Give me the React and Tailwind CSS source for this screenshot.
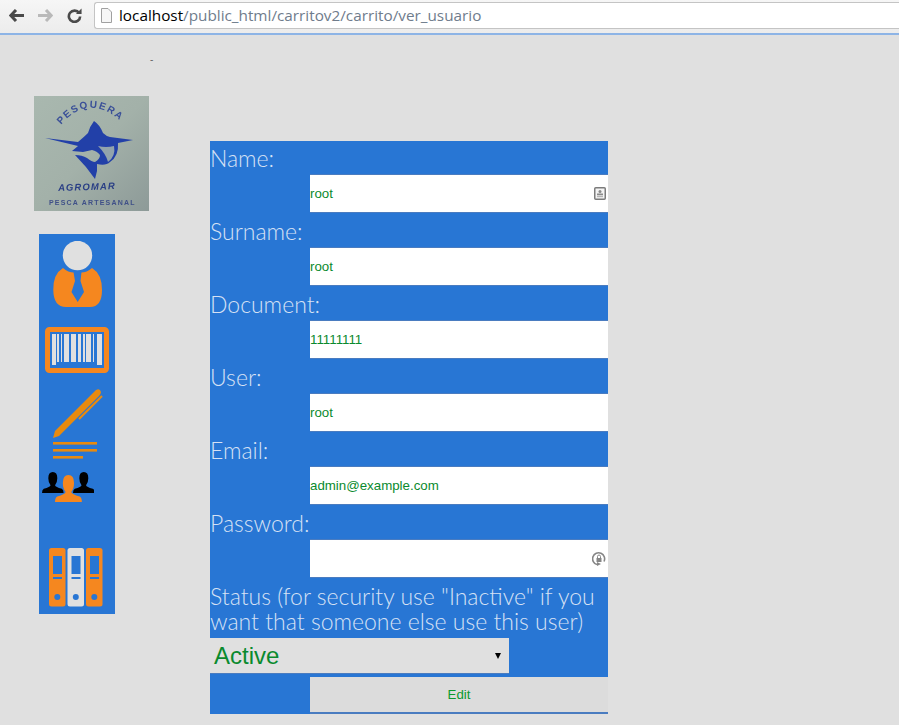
import React from 'react'

const labelClass = 'block pt-[1px] text-[23px] leading-[32px] font-light text-[#d6e1f4]'
const inputClass =
  "w-[298px] h-[39px] ml-[100px] bg-white border-y border-[#4a7cc0] flex items-center justify-between pr-[2px] font-['Liberation_Sans',sans-serif] text-[13.3px] text-[#0a8a2e]"

function NavIcons() {
  return (
    <div className="flex items-center w-[94px] pl-[9px] gap-[14px]">
      <svg width="15" height="13" viewBox="0 0 15 13">
        <path d="M7 1 L1.8 6.5 L7 12 M2 6.5 H15" fill="none" stroke="#4a4a4a" strokeWidth="3" />
      </svg>
      <svg width="15" height="13" viewBox="0 0 15 13">
        <path d="M8 1 L13.2 6.5 L8 12 M13 6.5 H0" fill="none" stroke="#b9b9b9" strokeWidth="3" />
      </svg>
      <svg width="15" height="15" viewBox="0 0 16 16">
        <path d="M13 5.5 A6 6 0 1 0 14 9" fill="none" stroke="#4a4a4a" strokeWidth="2.8" />
        <path d="M9.5 6.5 H15.5 V0.5 Z" fill="#4a4a4a" />
      </svg>
    </div>
  )
}

function Logo() {
  return (
    <svg width="115" height="115" viewBox="0 0 115 115" className="block">
      <defs>
        <linearGradient id="logoBg" x1="0" y1="0" x2="1" y2="1">
          <stop offset="0" stopColor="#a9b8af" />
          <stop offset="0.5" stopColor="#a3b1a9" />
          <stop offset="1" stopColor="#8d9a98" />
        </linearGradient>
        <path id="logoArc" d="M27 29 Q56 -6 92 30" fill="none" />
        <filter id="soft">
          <feGaussianBlur stdDeviation="0.45" />
        </filter>
      </defs>
      <rect width="115" height="115" fill="url(#logoBg)" />
      <g filter="url(#soft)">
        <text fontSize="10" fontWeight="700" fill="#3a5098" fontFamily="Liberation Sans, sans-serif" letterSpacing="1.6">
          <textPath href="#logoArc">PESQUERA</textPath>
        </text>
        <path
          d="M11 42 L44 46 Q50 41 54 37 Q56 30 60 25 Q66 29 69 37 Q72 40 76 41 L99 44 L84 47 Q85 60 76 66 Q72 70 63 68 L63 75 L61 83 Q52 70 41 59 Q48 59 53 62 Q58 66 61 66 Q66 63 66 59 Q63 55 58 54 L49 56 L38 55 L44 50 Z"
          fill="#2440a8"
        />
        <path d="M64 50 Q72 52 80 50 Q82 60 74 66 Q72 58 64 50 Z" fill="#92a3ac" />
        <text x="24" y="94" fontSize="9.5" fontWeight="700" fontStyle="italic" fill="#2a3f85" fontFamily="Liberation Sans, sans-serif" letterSpacing="1.1" transform="rotate(-2 56 90)">
          AGROMAR
        </text>
        <text x="15" y="109" fontSize="7" fontWeight="700" fill="#3f5088" fontFamily="Liberation Sans, sans-serif" letterSpacing="1.2">
          PESCA ARTESANAL
        </text>
      </g>
    </svg>
  )
}

function UserIcon() {
  return (
    <svg width="54" height="68" viewBox="0 0 54 68" className="block">
      <circle cx="26.5" cy="14.5" r="14.7" fill="#e0e0e0" />
      <path d="M12 27 Q2 33 2.3 49 Q2.5 66 15 66 H39 Q51 66 51 49 Q51 33 41 27 Q34 33 26.5 31 Q19 33 12 27 Z" fill="#f5871f" />
      <path d="M22.5 31 H30.5 L29.5 40 L33 51 L26.7 61 L20.5 51 L24 40 Z" fill="#2876d4" />
    </svg>
  )
}

function BarcodeIcon() {
  const bars = [[2, 4], [7, 2], [11, 1], [14, 5], [21, 5], [28, 3], [33, 2], [36, 5], [43, 1], [47, 5]]
  return (
    <svg width="64" height="46" viewBox="0 0 64 46" className="block">
      <rect x="2.5" y="2.5" width="59" height="41" rx="2" fill="none" stroke="#f5871f" strokeWidth="5" />
      <g fill="#e0e0e0">
        {bars.map(([x, w]) => (
          <rect key={x} x={x + 5} y="7" width={w} height={x === 2 || x === 47 ? 31 : 28} />
        ))}
      </g>
    </svg>
  )
}

function PenIcon() {
  return (
    <svg width="52" height="72" viewBox="0 0 52 72" className="block">
      <path d="M3 42 L44 1 Q48 -1 49 3 Q49 5 47 7 L7 47 L1 49 Z" fill="#e88a0e" />
      <path d="M27 30 L50 7" stroke="#e88a0e" strokeWidth="2.2" fill="none" />
      <rect x="1" y="53" width="44" height="2.6" fill="#e88a0e" />
      <rect x="1" y="60" width="44" height="2.6" fill="#e88a0e" />
      <rect x="1" y="67" width="30" height="2.6" fill="#e88a0e" />
    </svg>
  )
}

function PeopleIcon() {
  const person = 'M12 0 Q17 0 17 7 Q17 12 14.5 15 Q15 17 22 19 Q24 20 24 24 H0 Q0 20 2 19 Q9 17 9.5 15 Q7 12 7 7 Q7 0 12 0 Z'
  return (
    <svg width="52" height="32" viewBox="0 0 52 32" className="block">
      <path d={person} fill="#000" transform="translate(0 0) scale(0.9 0.875)" />
      <path d={person} fill="#000" transform="translate(31 0) scale(0.9 0.875)" />
      <path d={person} fill="#f5871f" transform="translate(13 3) scale(1.12 1.125)" />
    </svg>
  )
}

function Binder({ color }) {
  return (
    <g>
      <rect width="16.5" height="58.5" rx="2.5" fill={color} />
      <rect x="4" y="8" width="9" height="18" fill="#2876d4" />
      <rect x="4" y="29" width="9" height="2" fill="#2876d4" />
      <circle cx="8.3" cy="49" r="3" fill="#2876d4" />
    </g>
  )
}

function BindersIcon() {
  return (
    <svg width="54" height="59" viewBox="0 0 54 59" className="block">
      <Binder color="#f5871f" />
      <g transform="translate(18.5 0)">
        <Binder color="#e0e0e0" />
      </g>
      <g transform="translate(37 0)">
        <Binder color="#f5871f" />
      </g>
    </svg>
  )
}

function Field({ label, value, icon }) {
  return (
    <div>
      <label className={labelClass}>{label}</label>
      <div className={inputClass}>
        <span>{value}</span>
        {icon}
      </div>
      <div className="h-[1px]" />
    </div>
  )
}

const contactIcon = (
  <svg width="12" height="13" viewBox="0 0 12 13">
    <rect x="0.75" y="0.75" width="10.5" height="11.5" rx="1" fill="#f4f4f4" stroke="#7c7c7c" strokeWidth="1.5" />
    <circle cx="6" cy="4.6" r="1.5" fill="#8a8a8a" />
    <rect x="3" y="6.5" width="6" height="1.8" fill="#8a8a8a" />
    <rect x="3" y="9" width="6" height="1.2" fill="#b5b5b5" />
  </svg>
)

const lockIcon = (
  <svg width="14" height="14" viewBox="0 0 14 14">
    <path d="M12 9.5 A6 6 0 1 0 5 12.6" fill="none" stroke="#868686" strokeWidth="1.6" />
    <path d="M5 10 V14 L9 12 Z" fill="#868686" />
    <rect x="4.5" y="6" width="5" height="4" fill="#868686" />
    <path d="M5.5 6 V4.5 A1.5 1.5 0 0 1 8.5 4.5 V6" fill="none" stroke="#868686" />
  </svg>
)

export default function App() {
  return (
    <div className="min-h-[725px] bg-[#e0e0e0] font-['Liberation_Sans',sans-serif]">
      <div className="h-[35px] bg-gradient-to-b from-[#f6f6f6] to-[#ececec] border-b-2 border-[#8db4e6] flex items-start pt-[2px]">
        <div className="h-[27px] flex items-center">
          <NavIcons />
        </div>
        <div className="flex-1 h-[27px] bg-white border border-[#c4c4c4] border-r-0 rounded-l-[3px] flex items-center pl-[6px] gap-[7px]">
          <svg width="11" height="15" viewBox="0 0 11 15">
            <path d="M0.5 0.5 H7 L10.5 4 V14.5 H0.5 Z" fill="#f6f6f6" stroke="#a0a0a0" />
          </svg>
          <span className="text-[15.3px] leading-[20px] -mt-[2px] font-['Open_Sans',sans-serif] text-[#6f7c8c]">
            <span className="text-black">localhost</span>/public_html/carritov2/carrito/ver_usuario
          </span>
        </div>
      </div>

      <div className="flex items-start">
        <div className="w-[210px] shrink-0">
          <div className="h-[61px] relative">
            <span className="absolute left-[150px] top-[19px] text-[10px] leading-[12px] text-[#666]">-</span>
          </div>
          <div className="ml-[34px] w-[115px]">
            <Logo />
          </div>
          <div className="ml-[39px] mt-[23px] w-[76px] h-[380px] bg-[#2876d4] flex flex-col items-center">
            <div className="mt-[7px] ml-[2px]">
              <UserIcon />
            </div>
            <div className="mt-[18px]">
              <BarcodeIcon />
            </div>
            <div className="mt-[16px] ml-[2px]">
              <PenIcon />
            </div>
            <div className="mt-[11px] -ml-[19px]">
              <PeopleIcon />
            </div>
            <div className="mt-[44px] -ml-[2px]">
              <BindersIcon />
            </div>
          </div>
        </div>

        <div className="mt-[106px] w-[398px] bg-[#2876d4] font-['Lato',sans-serif]">
          <Field label="Name:" value="root" icon={contactIcon} />
          <Field label="Surname:" value="root" />
          <Field label="Document:" value="11111111" />
          <Field label="User:" value="root" />
          <Field label="Email:" value="admin@example.com" />
          <Field label="Password:" value="" icon={lockIcon} />
          <p className="text-[23px] leading-[25px] font-light text-[#d6e1f4] mt-[5px]">
            Status (for security use "Inactive" if you want that someone else use this user)
          </p>
          <div className="mt-[4px] w-[299px] h-[36px] bg-[#e0e0e0] border-b border-[#4a7cc0] flex items-center justify-between pl-[4px] pr-[8px] font-['Liberation_Sans',sans-serif] text-[24px] text-[#0a8a2e]">
            <span>Active</span>
            <span className="w-0 h-0 border-x-[3px] border-x-transparent border-t-[6px] border-t-black" />
          </div>
          <div className="mt-[3px] ml-[100px] h-[37px] bg-[#dcdcdc] border-b-2 border-[#4a7cc0] flex items-center justify-center font-['Liberation_Sans',sans-serif] text-[13.3px] text-[#0a9a2e]">
            Edit
          </div>
        </div>
      </div>
    </div>
  )
}
